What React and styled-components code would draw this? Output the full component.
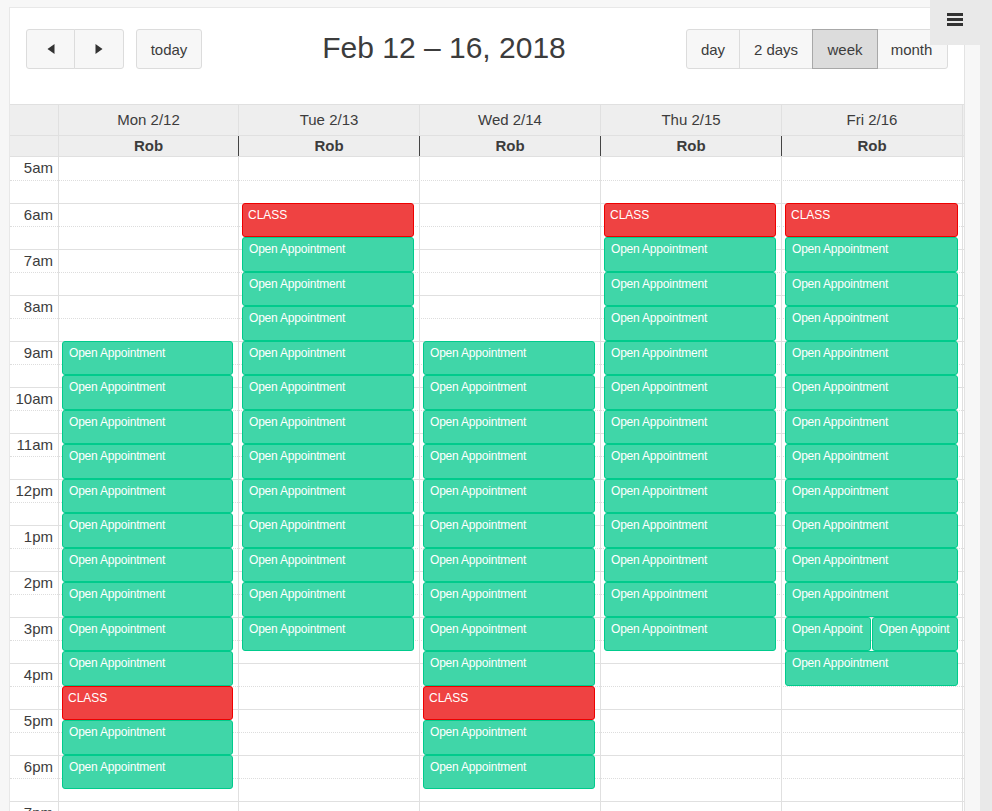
import React from "react";
import styled, { createGlobalStyle } from "styled-components";

const Global = createGlobalStyle`
  html, body { margin: 0; padding: 0; height: 811px; overflow: hidden; background: #f7f7f7; }
  body { font-family: "Liberation Sans", Arial, sans-serif; color: #3c3c3c; }
`;

const Page = styled.div`
  display: flex;
  width: 992px;
  height: 811px;
  overflow: hidden;
  position: relative;
`;
const Main = styled.div`
  width: 980px;
  padding: 7px 0 0 9px;
  box-sizing: border-box;
  background: #f7f7f7;
`;
const ScrollTrack = styled.div`
  width: 12px;
  background: #e9e9e9;
`;
const Card = styled.div`
  width: 956px;
  height: 804px;
  box-sizing: border-box;
  background: #fff;
  border-top: 1px solid #e8e8e8;
  border-left: 1px solid #e8e8e8;
  border-right: 1px solid #e3e3e3;
  overflow: hidden;
`;
const Toolbar = styled.div`
  display: flex;
  align-items: flex-start;
  justify-content: space-between;
  height: 96px;
  padding: 21px 16px 0;
  box-sizing: border-box;
`;
const ToolGroup = styled.div`
  display: flex;
  width: 176px;
`;
const BtnGroup = styled.div`
  display: flex;
  margin-right: ${p => p.$gap || 0}px;
`;
const Btn = styled.button`
  height: 40px;
  width: ${p => p.$w}px;
  box-sizing: border-box;
  padding: 0 ${p => p.$pr || 0}px 0 0;
  margin-left: ${p => (p.$first ? 0 : -1)}px;
  background: ${p => (p.$active ? "#dcdcdc" : "#f7f7f7")};
  border: 1px solid ${p => (p.$active ? "#a8a8a8" : "#dcdcdc")};
  border-radius: ${p => p.$r || "0"};
  color: #3c3c3c;
  font: 15px "Liberation Sans", Arial, sans-serif;
  display: flex;
  align-items: center;
  justify-content: center;
  position: relative;
  z-index: ${p => (p.$active ? 1 : 0)};
`;
const Title = styled.h2`
  margin: 0;
  font: 400 30px/38px "Liberation Sans", Arial, sans-serif;
  color: #3c3c3c;
  white-space: nowrap;
`;
const MenuButton = styled.div`
  position: absolute;
  left: 930px;
  top: 0;
  width: 50px;
  height: 45px;
  background: #e9e9e9;
  display: flex;
  align-items: flex-start;
  justify-content: center;
  padding-top: 13px;
  box-sizing: border-box;
`;
const cols = "48px 180px 181px 181px 181px 182px";
const HeadRow = styled.div`
  display: grid;
  grid-template-columns: ${cols};
  height: ${p => (p.$last ? 22 : 31)}px;
  background: #eee;
  border-top: 1px solid #e0e0e0;
  box-sizing: border-box;
  ${p => p.$last && "border-bottom: 1px solid #e0e0e0;"}
`;
const HeadCell = styled.div`
  box-sizing: border-box;
  border-left: 1px solid ${p => (p.$dark ? "#444" : "#e0e0e0")};
  ${p => p.$edge && "border-right: 1px solid #e0e0e0;"}
  text-align: center;
  font-size: 15px;
  font-weight: ${p => (p.$bold ? 700 : 400)};
  line-height: ${p => p.$lh}px;
  color: #3c3c3c;
`;
const AxisHead = styled.div``;
const Body = styled.div`
  position: relative;
  height: 670px;
`;
const Slots = styled.div`
  display: flex;
  flex-direction: column;
`;
const SlotRow = styled.div`
  display: grid;
  grid-template-columns: ${cols};
  height: ${p => (p.$first ? 24 : 23)}px;
  box-sizing: border-box;
  border-bottom: 1px ${p => (p.$minor ? "dotted #ddd" : "solid #e0e0e0")};
`;
const AxisCell = styled.div`
  text-align: right;
  padding-right: 5px;
  font-size: 15px;
  line-height: 22px;
  color: #3c3c3c;
`;
const Spacer = styled.div``;
const ColumnLines = styled.div`
  position: absolute;
  inset: 0;
  display: grid;
  grid-template-columns: ${cols};
  pointer-events: none;
`;
const ColumnLine = styled.div`
  border-left: 1px solid #e0e0e0;
  ${p => p.$edge && "border-right: 1px solid #e0e0e0;"}
`;
const Events = styled.div`
  position: absolute;
  inset: 0;
  display: grid;
  grid-template-columns: ${cols};
`;
const DayColumn = styled.div`
  padding: ${p => p.$top}px 5px 0 4px;
  box-sizing: border-box;
  display: flex;
  flex-direction: column;
`;
const SplitRow = styled.div`
  display: flex;
  gap: 1px;
  height: 34.5px;
`;
const Event = styled.div`
  box-sizing: border-box;
  height: 34.5px;
  flex: ${p => (p.$half ? "1 1 0" : "none")};
  min-width: 0;
  overflow: hidden;
  white-space: nowrap;
  padding: 3.7px 0 0 ${p => (p.$cls ? 5 : 6)}px;
  font-size: 12px;
  line-height: 14px;
  letter-spacing: ${p => (p.$cls ? 0 : "-0.2px")};
  color: #fff;
  border-radius: 3px;
  border: 1px solid ${p => (p.$cls ? "#ee0000" : "#00cb8c")};
  background: ${p => (p.$cls ? "#ef4242" : "#40d6a8")};
`;
const Triangle = ({ dir }) => (
  <svg width="8" height="10" viewBox="0 0 8 10">
    <path d={dir === "l" ? "M7.5 0V10L0.5 5Z" : "M0.5 0V10L7.5 5Z"} fill="#333" />
  </svg>
);
const Burger = () => (
  <svg width="16" height="13" viewBox="0 0 16 13">
    <path d="M0 0h16v3H0zM0 5h16v3H0zM0 10h16v3H0z" fill="#333" />
  </svg>
);

const hours = ["5am","6am","7am","8am","9am","10am","11am","12pm","1pm","2pm","3pm","4pm","5pm","6pm","7pm"];
const days = ["Mon 2/12","Tue 2/13","Wed 2/14","Thu 2/15","Fri 2/16"];
const O = "Open Appointment";
const C = "CLASS";
const rep = (n, v = O) => Array(n).fill(v);
const columns = [
  { top: 183.9, items: [...rep(10), C, O, O] },
  { top: 45.9, items: [C, ...rep(12)] },
  { top: 183.9, items: [...rep(10), C, O, O] },
  { top: 45.9, items: [C, ...rep(12)] },
  { top: 45.9, items: [C, ...rep(11), "split", O] },
];

export default function App() {
  return (
    <Page>
      <Global />
      <Main>
        <Card>
          <Toolbar>
            <ToolGroup>
              <BtnGroup $gap={12}>
                <Btn $first $w={49} $r="3px 0 0 3px"><Triangle dir="l" /></Btn>
                <Btn $w={50} $r="0 3px 3px 0"><Triangle dir="r" /></Btn>
              </BtnGroup>
              <Btn $first $w={66} $r="3px">today</Btn>
            </ToolGroup>
            <Title>Feb 12 – 16, 2018</Title>
            <BtnGroup>
              <Btn $first $w={54} $r="3px 0 0 3px">day</Btn>
              <Btn $w={74}>2 days</Btn>
              <Btn $w={66} $active>week</Btn>
              <Btn $w={71} $pr={2} $r="0 3px 3px 0">month</Btn>
            </BtnGroup>
          </Toolbar>
          <HeadRow>
            <AxisHead />
            {days.map((d, i) => <HeadCell key={d} $lh={30} $edge={i === 4}>{d}</HeadCell>)}
          </HeadRow>
          <HeadRow $last>
            <AxisHead />
            {days.map((d, i) => <HeadCell key={d} $lh={20} $bold $dark={i > 0} $edge={i === 4}>Rob</HeadCell>)}
          </HeadRow>
          <Body>
            <Slots>
              {hours.map((h, i) => (
                <React.Fragment key={h}>
                  <SlotRow $minor $first={i === 0}><AxisCell>{h}</AxisCell></SlotRow>
                  <SlotRow />
                </React.Fragment>
              ))}
            </Slots>
            <ColumnLines>
              <Spacer />
              {days.map((d, i) => <ColumnLine key={d} $edge={i === 4} />)}
            </ColumnLines>
            <Events>
              <Spacer />
              {columns.map((c, i) => (
                <DayColumn key={i} $top={c.top}>
                  {c.items.map((t, j) =>
                    t === "split" ? (
                      <SplitRow key={j}>
                        <Event $half>Open Appoint</Event>
                        <Event $half>Open Appoint</Event>
                      </SplitRow>
                    ) : (
                      <Event key={j} $cls={t === C}>{t}</Event>
                    )
                  )}
                </DayColumn>
              ))}
            </Events>
          </Body>
        </Card>
      </Main>
      <ScrollTrack />
      <MenuButton><Burger /></MenuButton>
    </Page>
  );
}
